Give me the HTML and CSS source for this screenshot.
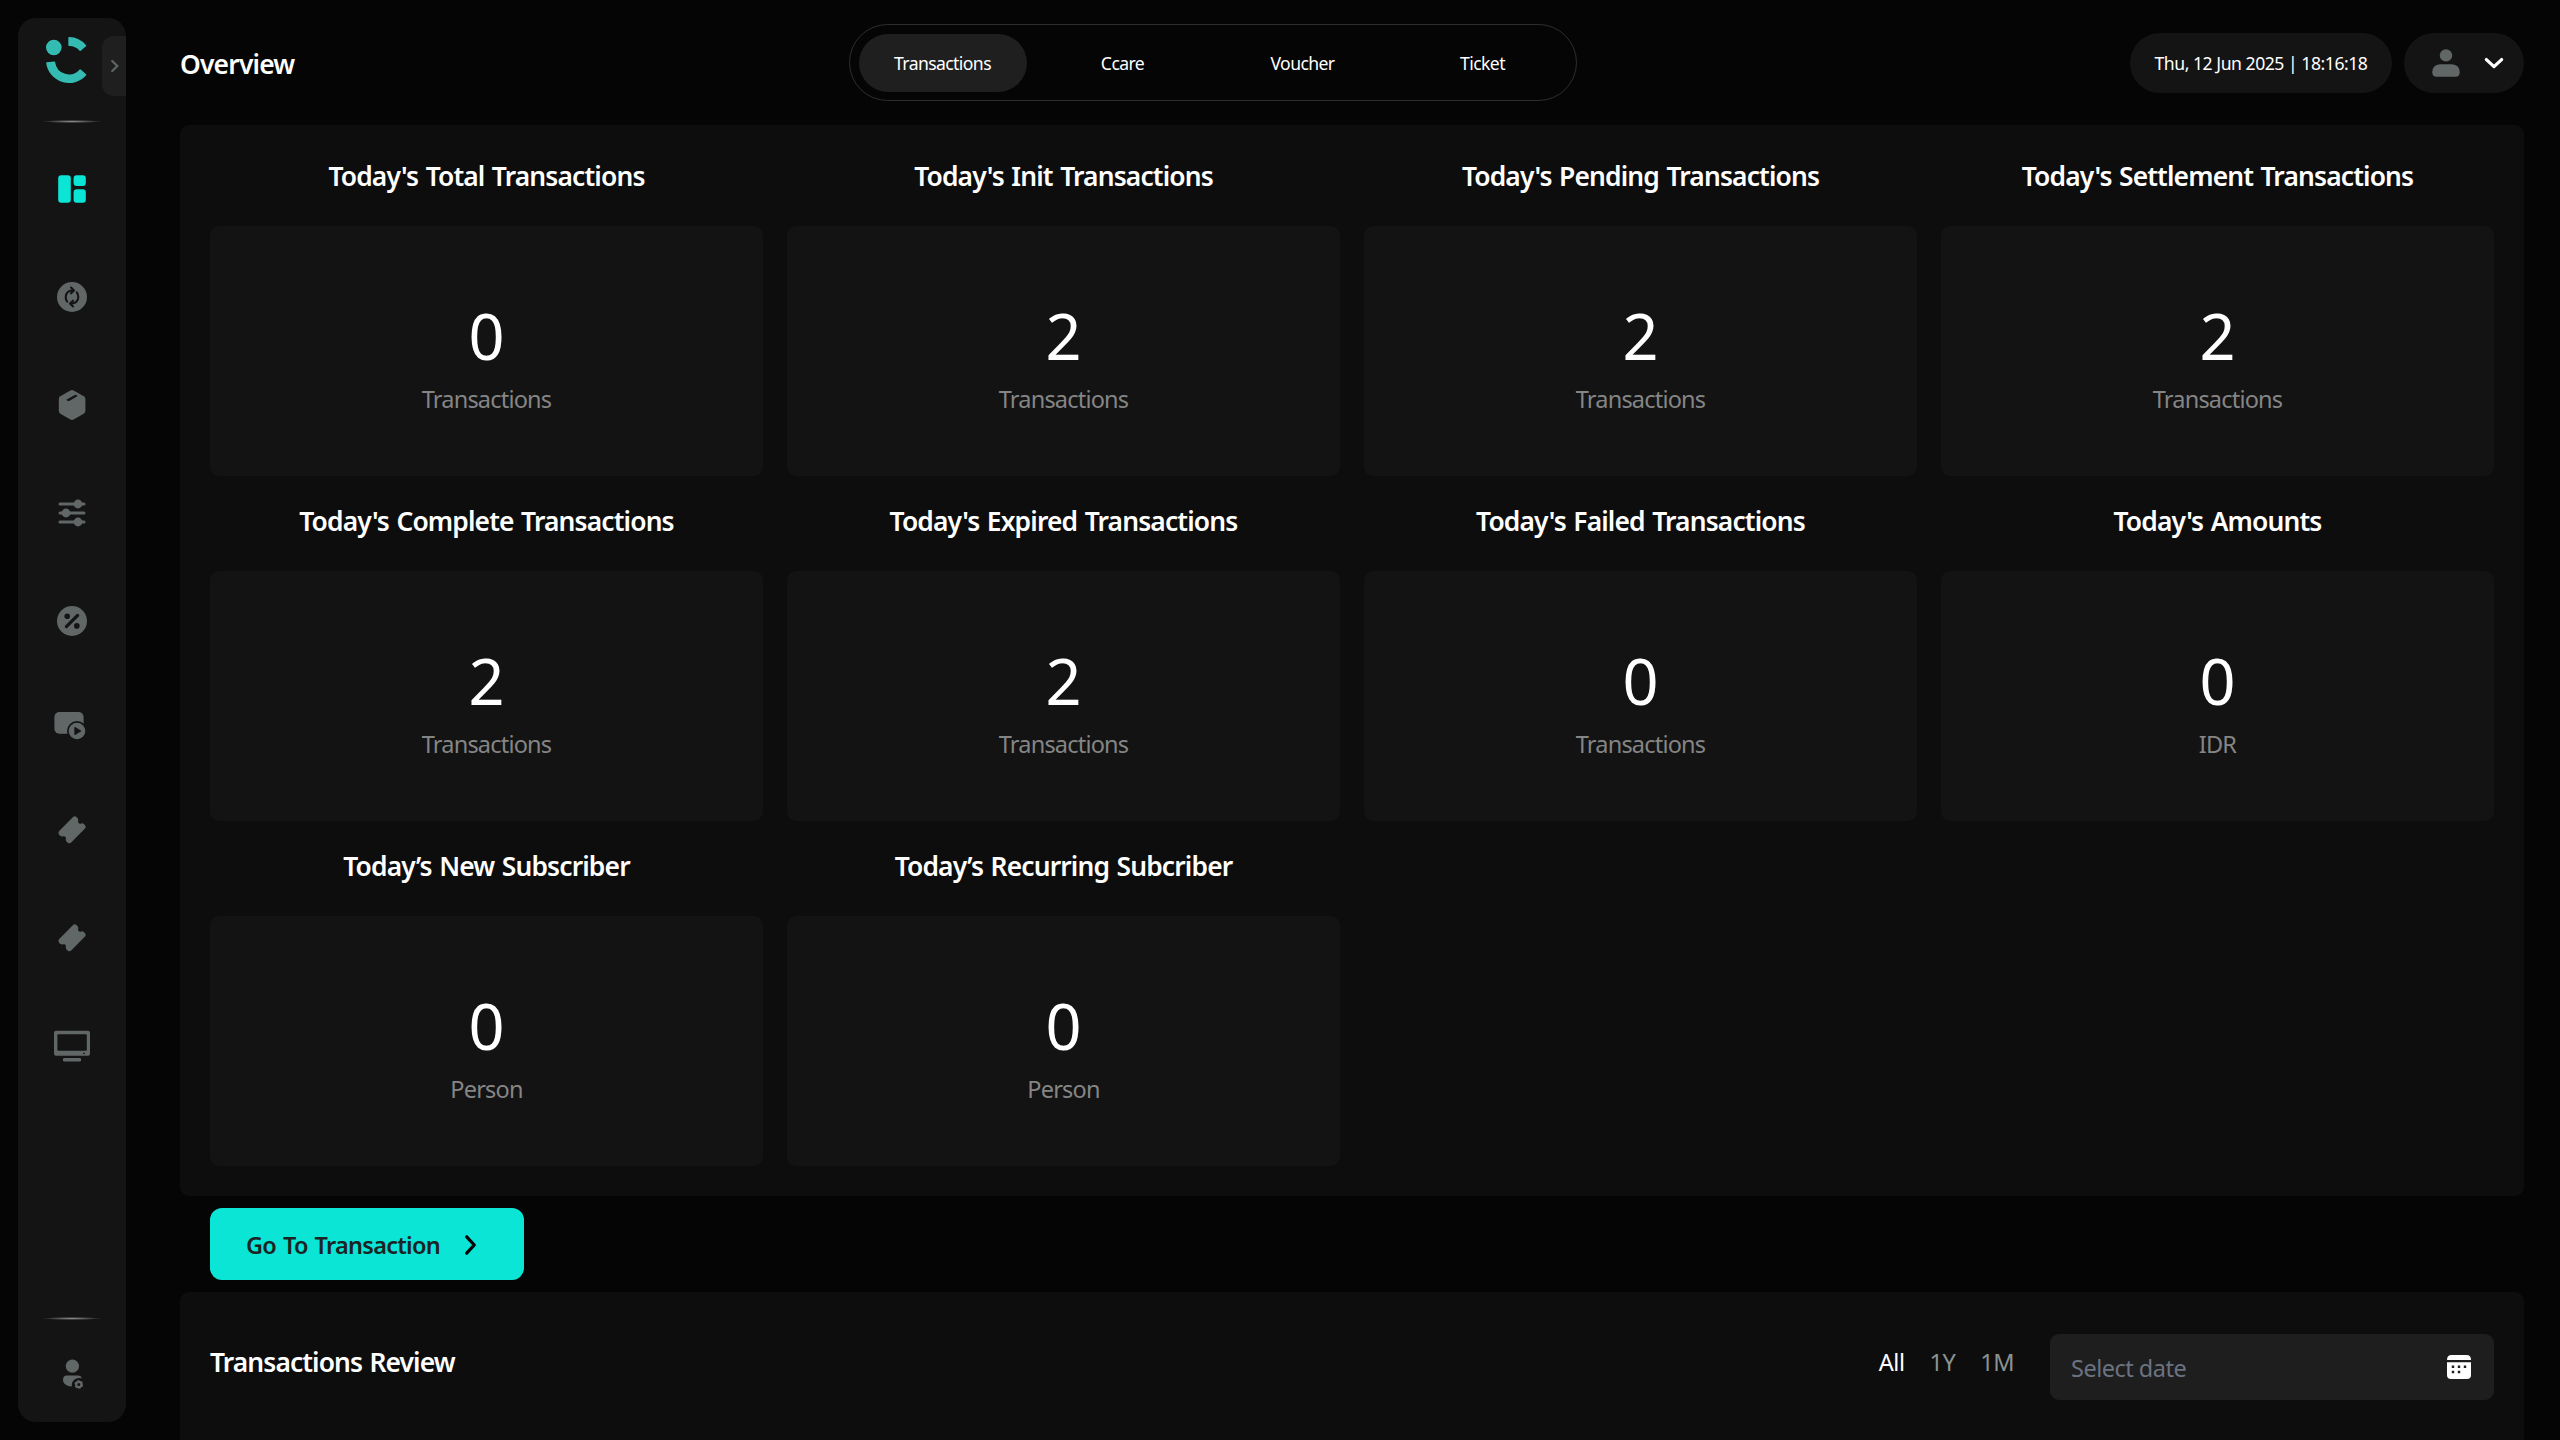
FILE: index.html
```html
<!DOCTYPE html>
<html lang="en">
<head>
<meta charset="utf-8">
<title>Overview</title>
<link rel="stylesheet" href="styles.css">
</head>
<body>
<aside class="sidebar">
  <svg class="logo" width="42" height="48" viewBox="0 0 42 48">
    <circle cx="7.8" cy="11.5" r="7.8"/>
    <path class="logo-arc" d="M.9 26.9A22.25 22.25 0 0 0 39.6 38.8L34.2 34A14.75 14.75 0 0 1 8.4 26.3Z"/>
    <path class="logo-arc" d="M23.1 1.8A22.25 22.25 0 0 1 39.5 9.7L34.2 14.2A14.75 14.75 0 0 0 23.1 9.3Z"/>
  </svg>
  <button class="expand" aria-label="Expand menu">
    <svg width="10" height="14" viewBox="0 0 10 14"><path class="line-muted" d="M2.2 2L7.4 7L2.2 12"/></svg>
  </button>
  <hr class="divider">
  <nav class="side-nav">
    <a class="side-item active"><svg width="30" height="30" viewBox="0 0 30 30"><rect x="1.2" y="1.3" width="12.6" height="27.4" rx="3"/><rect x="16.6" y="1.3" width="12.2" height="10.8" rx="3"/><rect x="16.6" y="15.2" width="12.2" height="13.5" rx="3"/></svg></a>
    <a class="side-item"><svg width="30" height="30" viewBox="0 0 30 30"><circle cx="15" cy="15" r="15"/><g class="cut-line"><path d="M10.2 19.7C8 17 8.3 12.4 10.6 10.2C12 8.8 13.6 8.3 16 8.5M14 5.5L17 8.4L14 11.3"/><path d="M19.8 10.3C22 13 21.7 17.6 19.4 19.8C18 21.2 16.4 21.7 14 21.5M16 24.5L13 21.6L16 18.7"/></g></svg></a>
    <a class="side-item"><svg width="30" height="30" viewBox="0 0 30 30"><path d="M13.4.5Q15-.4 16.6.5L26.7 6.2Q28.4 7.2 28.4 9V21Q28.4 22.8 26.7 23.8L16.6 29.5Q15 30.4 13.4 29.5L3.3 23.8Q1.8 22.8 1.8 21V9Q1.8 7.2 3.3 6.2Z"/><path class="cut" d="M9.3 9.8L17.8 4.9Q19 4.7 20.7 6L12.2 11Q10.5 11.2 9.3 9.8Z"/></svg></a>
    <a class="side-item"><svg width="30" height="30" viewBox="0 0 30 30"><path class="line" d="M3 6H27M3 15H27M3 24H27"/><circle cx="21" cy="6" r="4.4"/><circle cx="9" cy="15" r="4.4"/><circle cx="21" cy="24" r="4.4"/></svg></a>
    <a class="side-item"><svg width="30" height="30" viewBox="0 0 30 30"><circle cx="15" cy="15" r="15"/><circle class="cut" cx="10.2" cy="10.2" r="2.8"/><circle class="cut" cx="19.8" cy="19.9" r="2.8"/><path class="cut-line thick" d="M9.4 20.6L20.6 9.4"/></svg></a>
    <a class="side-item vod"><svg width="36" height="28" viewBox="0 0 36 28"><rect x=".4" y="0" width="29.2" height="21.8" rx="5"/><circle class="cut" cx="23" cy="19" r="10"/><circle cx="23" cy="19" r="8.3"/><path class="cut" d="M20.3 15.4Q20.5 14.8 21.2 15.1L26.8 18.4Q27.4 19 26.8 19.5L21.2 22.9Q20.5 23.2 20.3 22.6Z"/></svg></a>
    <a class="side-item voucher"><svg width="28" height="28" viewBox="0 0 28 28"><path d="M14.8 1.2Q16.6-.4 18.4 1L19.6 2.3Q20.7 3.8 20 5.6Q20.1 7.9 22.6 7.8Q24.3 6.8 25.9 7.9L27 9.2Q28.4 11 27 12.6L13.2 26.6Q11.5 28 9.8 26.8L8.5 25.5Q7.4 24 8 22.3Q7.8 19.8 5.4 20.2Q3.6 20.9 2 19.7L1 18.6Q-.1 16.8 1.2 15.1Z"/></svg></a>
    <a class="side-item"><svg width="28" height="28" viewBox="0 0 28 28"><path d="M14.8 1.2Q16.6-.4 18.4 1L19.6 2.3Q20.7 3.8 20 5.6Q20.1 7.9 22.6 7.8Q24.3 6.8 25.9 7.9L27 9.2Q28.4 11 27 12.6L13.2 26.6Q11.5 28 9.8 26.8L8.5 25.5Q7.4 24 8 22.3Q7.8 19.8 5.4 20.2Q3.6 20.9 2 19.7L1 18.6Q-.1 16.8 1.2 15.1Z"/></svg></a>
    <a class="side-item"><svg width="36" height="32" viewBox="0 0 36 32"><rect x="0" y=".7" width="36" height="25" rx="2"/><rect class="cut" x="3.4" y="4.3" width="29.4" height="16.5" rx="1"/><rect class="cut" x="29" y="22.9" width="2" height="1"/><rect x="9" y="28" width="18" height="3.5" rx="1.2"/></svg></a>
  </nav>
  <hr class="divider">
  <a class="account"><svg width="22" height="32" viewBox="0 0 22 32"><circle cx="10.4" cy="7.2" r="6.6"/><path d="M4.6 16.5H16.5Q19 16.6 20 19.5C14 17.6 9.2 21.5 9.9 27.6C4.5 27.4 1 25 1 20.6Q1.2 16.7 4.6 16.5Z"/><circle class="gear" cx="16.8" cy="25.5" r="2.6"/><circle class="gear-teeth" cx="16.8" cy="25.5" r="3.6"/></svg></a>
</aside>

<main class="main">
  <header class="header">
    <h1 class="page-title">Overview</h1>
    <nav class="tabs">
      <a class="tab selected">Transactions</a>
      <a class="tab">Ccare</a>
      <a class="tab">Voucher</a>
      <a class="tab">Ticket</a>
    </nav>
    <div class="header-end">
      <div class="clock">Thu, 12 Jun 2025 | 18:16:18</div>
      <button class="user" aria-label="User menu">
        <svg width="28" height="28" viewBox="0 0 28 28"><circle cx="14" cy="6.4" r="6.2"/><path d="M8 15.2H20Q27.6 15.6 27.7 23.2Q27.6 27.7 23.6 27.8H4.4Q.4 27.7.3 23.2Q.4 15.6 8 15.2Z"/></svg>
        <svg width="20" height="14" viewBox="0 0 20 14"><path class="line-white" d="M2.4 3.6L10 10.6L17.6 3.6"/></svg>
      </button>
    </div>
  </header>

  <section class="panel stats">
    <article><h2 class="stat-title">Today's Total Transactions</h2><div class="card"><b class="value">0</b><span class="unit">Transactions</span></div></article>
    <article><h2 class="stat-title">Today's Init Transactions</h2><div class="card"><b class="value">2</b><span class="unit">Transactions</span></div></article>
    <article><h2 class="stat-title">Today's Pending Transactions</h2><div class="card"><b class="value">2</b><span class="unit">Transactions</span></div></article>
    <article><h2 class="stat-title">Today's Settlement Transactions</h2><div class="card"><b class="value">2</b><span class="unit">Transactions</span></div></article>
    <article><h2 class="stat-title">Today's Complete Transactions</h2><div class="card"><b class="value">2</b><span class="unit">Transactions</span></div></article>
    <article><h2 class="stat-title">Today's Expired Transactions</h2><div class="card"><b class="value">2</b><span class="unit">Transactions</span></div></article>
    <article><h2 class="stat-title">Today's Failed Transactions</h2><div class="card"><b class="value">0</b><span class="unit">Transactions</span></div></article>
    <article><h2 class="stat-title">Today's Amounts</h2><div class="card"><b class="value">0</b><span class="unit">IDR</span></div></article>
    <article><h2 class="stat-title">Today’s New Subscriber</h2><div class="card"><b class="value">0</b><span class="unit">Person</span></div></article>
    <article><h2 class="stat-title">Today’s Recurring Subcriber</h2><div class="card"><b class="value">0</b><span class="unit">Person</span></div></article>
  </section>

  <button class="go">Go To Transaction
    <svg width="14" height="22" viewBox="0 0 14 22"><path class="line-dark" d="M2.7 2.8L10.3 11L2.7 19.2"/></svg>
  </button>

  <section class="panel review">
    <h2 class="review-title">Transactions Review</h2>
    <div class="ranges"><a class="range selected">All</a><a class="range">1Y</a><a class="range">1M</a></div>
    <div class="date-field"><span class="placeholder">Select date</span>
      <svg width="24" height="24" viewBox="0 0 24 24"><path d="M0 5Q0 0 4.5 0H19.5Q24 0 24 5Z"/><path d="M0 7.2H24V20Q24 24 20 24H4Q0 24 0 20Z"/><path class="dots" d="M4.8 11.8h2.4M10.8 11.8h2.4M16.8 11.8h2.4M4.8 17h2.4M10.8 17h2.4"/></svg>
    </div>
  </section>
</main>
</body>
</html>
```
FILE: styles.css
```css
* { box-sizing: border-box; margin: 0; }
body {
  display: flex;
  height: 1440px;
  overflow: hidden;
  background: #050505;
  color: #fff;
  font-family: "Noto Sans", "Open Sans", sans-serif;
}
svg { display: block; flex: none; }
button { border: 0; padding: 0; font: inherit; }

.sidebar {
  position: relative;
  display: flex;
  flex-direction: column;
  flex: none;
  width: 108px;
  height: 1404px;
  margin: 18px 54px 0 18px;
  padding-top: 18px;
  border-radius: 18px;
  background: #141414;
  fill: #616766;
}
.logo { margin: 0 0 36px 28px; fill: #35bcb2; }
.logo-arc { stroke: #35bcb2; stroke-width: 1.5; stroke-linejoin: round; }
.expand {
  position: absolute;
  top: 18px;
  right: 0;
  display: grid;
  place-items: center;
  width: 24px;
  height: 60px;
  padding-left: 1px;
  border-radius: 12px 0 0 12px;
  background: #1f1f1f;
}
.line-muted { fill: none; stroke: #616766; stroke-width: 2.2; stroke-linecap: round; stroke-linejoin: round; }
.divider {
  flex: none;
  width: 60px;
  height: 3px;
  margin-left: 24px;
  border: 0;
  background: radial-gradient(closest-side, #8c8c8c, #141414);
}
.side-nav { height: 1194px; padding-top: 12px; }
.side-item { display: grid; place-items: center; height: 108px; }
.side-item.active { fill: #0ae5d6; }
.side-item.vod { height: 102px; }
.side-item.voucher { height: 107px; padding-bottom: 1px; }
.cut { fill: #141414; }
.cut-line { fill: none; stroke: #141414; stroke-width: 2.1; stroke-linecap: round; stroke-linejoin: round; }
.cut-line.thick { stroke-width: 3.2; }
.line { fill: none; stroke: #616766; stroke-width: 3; stroke-linecap: round; }
.account { margin: 39px 0 0 44px; }
.gear { fill: none; stroke: #616766; stroke-width: 2.2; }
.gear-teeth { fill: none; stroke: #616766; stroke-width: 1.4; stroke-dasharray: 2.1 1.67; }

.main { width: 2344px; }
.header {
  display: grid;
  grid-template-columns: 669px 728px 1fr;
  align-items: center;
  height: 125px;
}
.page-title { padding-top: 3px; font-size: 26.4px; font-weight: 600; letter-spacing: -0.8px; }
.tabs {
  display: grid;
  grid-template-columns: repeat(4, 168px);
  gap: 12px;
  height: 77px;
  padding: 9px;
  border: 1px solid #2e2e2e;
  border-radius: 39px;
}
.tab {
  padding-right: 1px;
  border-radius: 29px;
  font-size: 17.6px;
  letter-spacing: -0.6px;
  line-height: 58px;
  text-align: center;
}
.tab.selected { background: #1f1f1f; }
.header-end { display: flex; justify-content: flex-end; gap: 12px; margin-top: 1px; }
.clock {
  width: 262px;
  height: 60px;
  border-radius: 30px;
  background: #141414;
  font-size: 17.6px;
  letter-spacing: -0.47px;
  line-height: 60px;
  text-align: center;
}
.user {
  display: flex;
  align-items: center;
  gap: 24px;
  width: 120px;
  height: 60px;
  padding-left: 28px;
  border-radius: 30px;
  background: #141414;
  fill: #616766;
}
.line-white { fill: none; stroke: #fff; stroke-width: 3.3; stroke-linecap: round; stroke-linejoin: round; }

.panel { border-radius: 9px; background: #0d0d0d; }
.stats {
  display: grid;
  grid-template-columns: repeat(4, 1fr);
  gap: 24px;
  padding: 30px;
}
.stat-title {
  padding: 1px 0 29px;
  font-size: 26.4px;
  font-weight: 600;
  letter-spacing: -0.85px;
  line-height: 41px;
  text-align: center;
  word-spacing: 1.4px;
}
.card {
  display: flex;
  flex-direction: column;
  align-items: center;
  height: 250px;
  padding-top: 69px;
  border-radius: 9px;
  background: #131313;
}
.value { font-size: 63px; font-weight: 400; line-height: 81px; }
.unit { color: #858585; font-size: 23.5px; letter-spacing: -0.8px; line-height: 47px; }

.go {
  display: flex;
  align-items: center;
  gap: 24px;
  width: 314px;
  height: 72px;
  margin: 12px 0 12px 30px;
  padding: 1px 0 0 36px;
  border-radius: 12px;
  background: #0ae5d6;
  color: #1c2423;
  font-size: 23.5px;
  font-weight: 600;
  letter-spacing: -0.72px;
  word-spacing: 1.4px;
}
.line-dark { fill: none; stroke: #050505; stroke-width: 3.2; stroke-linecap: round; stroke-linejoin: round; }

.review {
  display: flex;
  align-items: flex-start;
  height: 148px;
  padding: 42px 30px 0;
  border-radius: 9px 9px 0 0;
}
.review-title { flex: 1; font-size: 26.4px; font-weight: 600; letter-spacing: -0.9px; line-height: 56px; word-spacing: 1.4px; }
.ranges { display: flex; gap: 25px; margin-right: 36px; font-size: 23.5px; letter-spacing: -0.5px; line-height: 56px; }
.range { color: #8b9391; }
.range.selected { color: #fff; }
.date-field {
  display: flex;
  align-items: center;
  justify-content: space-between;
  width: 444px;
  height: 66px;
  padding: 0 23px 0 21px;
  border-radius: 9px;
  background: #1e1e1e;
  color: #6b7280;
  fill: #fff;
  font-size: 23.5px;
  letter-spacing: -0.5px;
}
.placeholder { padding-top: 2px; }
.dots { fill: none; stroke: #1e1e1e; stroke-width: 2.4; }
```
